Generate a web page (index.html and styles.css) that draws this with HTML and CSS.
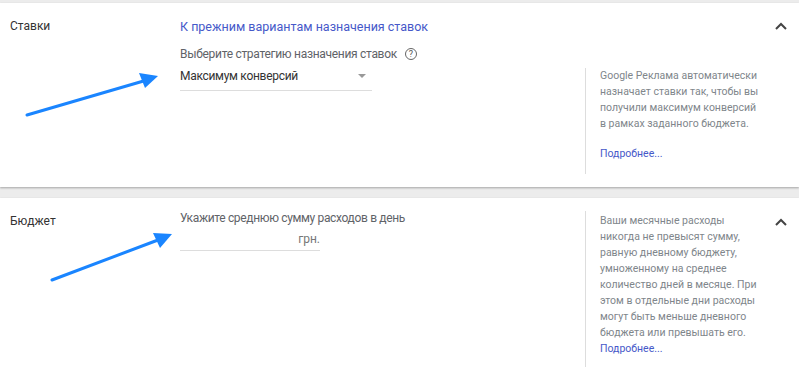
FILE: index.html
```html
<!DOCTYPE html>
<html lang="ru">
<head>
<meta charset="utf-8">
<link rel="stylesheet" href="styles.css">
</head>
<body>
<div class="page">
  <section class="card card-bids">
    <div class="label">Ставки</div>
    <div class="main">
      <a class="link" href="#">К прежним вариантам назначения ставок</a>
      <div class="field-label">Выберите стратегию назначения ставок <span class="q">?</span></div>
      <div class="select"><span>Максимум конверсий</span><span class="caret"></span></div>
    </div>
    <div class="help help-bids">
      <p>Google Реклама автоматически<br>назначает ставки так, чтобы вы<br>получили максимум конверсий<br>в рамках заданного бюджета.</p>
      <a class="more more-gap" href="#">Подробнее...</a>
    </div>
    <div class="toggle"><svg width="12" height="8" viewBox="0 0 12 8"><path d="M1 7 L6 2 L11 7" fill="none" stroke="#444" stroke-width="2"/></svg></div>
    <svg class="arrow arrow-1" width="140" height="50" viewBox="0 0 140 50"><line x1="2" y1="43" x2="122" y2="8" stroke="#1a85ff" stroke-width="3" stroke-linecap="round"/><polygon points="133,4 114,1 120,16" fill="#1a85ff"/></svg>
  </section>
  <section class="card card-budget">
    <div class="label">Бюджет</div>
    <div class="main">
      <div class="field-label">Укажите среднюю сумму расходов в день</div>
      <div class="money"><span>грн.</span></div>
    </div>
    <div class="help">
      <p>Ваши месячные расходы<br>никогда не превысят сумму,<br>равную дневному бюджету,<br>умноженному на среднее<br>количество дней в месяце. При<br>этом в отдельные дни расходы<br>могут быть меньше дневного<br>бюджета или превышать его.</p>
      <a class="more" href="#">Подробнее...</a>
    </div>
    <div class="toggle"><svg width="12" height="8" viewBox="0 0 12 8"><path d="M1 7 L6 2 L11 7" fill="none" stroke="#444" stroke-width="2"/></svg></div>
    <svg class="arrow arrow-2" width="130" height="56" viewBox="0 0 130 56"><line x1="2" y1="50" x2="108" y2="10" stroke="#1a85ff" stroke-width="3" stroke-linecap="round"/><polygon points="122,4 103,3 110,18" fill="#1a85ff"/></svg>
  </section>
</div>
</body>
</html>
```
FILE: styles.css
```css
html, body {
  margin: 0;
  padding: 0;
  background: #ececec;
  font-family: Roboto, "Noto Sans", sans-serif;
  color: #333;
  overflow: hidden;
}
.page {
  padding-top: 3px;
  display: flex;
  flex-direction: column;
  gap: 11px;
}
.card {
  position: relative;
  background: #fff;
  display: flex;
  box-shadow: 0 1px 2px rgba(0,0,0,0.3);
}
.card-bids { height: 184px; }
.card-budget { height: 200px; }
.label {
  width: 170px;
  padding: 13px 0 0 10px;
  font-size: 12px;
  line-height: 20px;
  color: #333;
}
.main {
  width: 405px;
  padding-top: 14px;
}
.card-budget .main { padding-top: 11px; }
.link {
  display: block;
  font-size: 12.5px;
  line-height: 20px;
  color: #4659c9;
  text-decoration: none;
}
.field-label {
  margin-top: 8px;
  font-size: 12px;
  letter-spacing: -0.3px;
  line-height: 18px;
  color: #5f6368;
  display: flex;
  align-items: center;
}
.card-budget .field-label { margin-top: 0; letter-spacing: -0.35px; }
.q {
  display: inline-flex;
  align-items: center;
  justify-content: center;
  width: 10px;
  height: 10px;
  margin-left: 8px;
  border: 1.2px solid #666;
  border-radius: 50%;
  font-size: 9px;
  line-height: 1;
  letter-spacing: 0;
  color: #555;
}
.select {
  width: 192px;
  height: 27px;
  margin-top: 1px;
  display: flex;
  align-items: center;
  justify-content: space-between;
  font-size: 12px;
  letter-spacing: -0.3px;
  color: #333;
  border-bottom: 1px solid #ddd;
  box-sizing: border-box;
  padding-bottom: 3px;
}
.caret {
  margin-right: 6px;
  border-left: 4.5px solid transparent;
  border-right: 4.5px solid transparent;
  border-top: 4.5px solid #999;
}
.money {
  width: 140px;
  height: 23px;
  border-bottom: 1px solid #ddd;
  display: flex;
  justify-content: flex-end;
  align-items: center;
  font-size: 12px;
  color: #777;
}
.help {
  width: 186px;
  margin-top: 13px;
  margin-bottom: 12px;
  padding-left: 14px;
  border-left: 1px solid #ddd;
  font-size: 10.5px;
  line-height: 16px;
  letter-spacing: 0;
  color: #80868b;
  box-sizing: border-box;
  white-space: nowrap;
}
.help-bids { margin-top: 65px; margin-bottom: 13px; }
.help p { margin: 0; padding-top: 2px; }
.help-bids p { padding-top: 0; }
.more {
  display: block;
  color: #4659c9;
  text-decoration: none;
}
.more-gap { margin-top: 14px; }
.toggle {
  flex: 1;
  display: flex;
  justify-content: flex-end;
  padding: 19px 12px 0 0;
}
.card-budget .toggle { padding-top: 20px; }
.toggle svg { display: block; }
.arrow { position: absolute; }
.arrow-1 { left: 25px; top: 69px; }
.arrow-2 { left: 50px; top: 32px; }
```
